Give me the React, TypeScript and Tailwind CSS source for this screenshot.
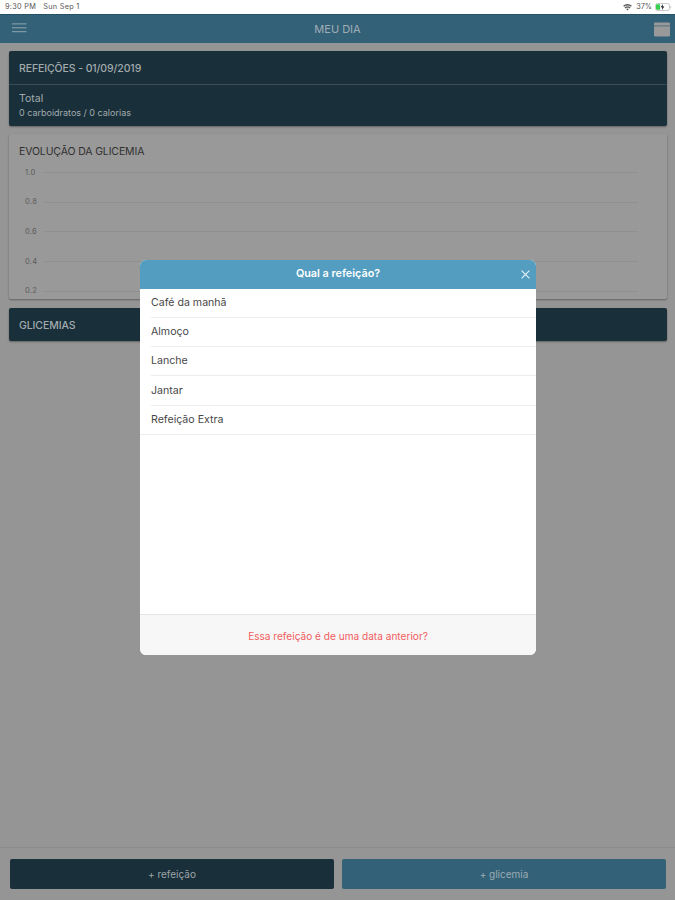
import type { ReactNode } from "react";

const meals = ["Café da manhã", "Almoço", "Lanche", "Jantar", "Refeição Extra"];
const ticks = ["1.0", "0.8", "0.6", "0.4", "0.2"];

const StatusBar = () => (
    <div className="flex h-[14px] items-center justify-between bg-white pr-[3px] pl-[5px] text-[7.3px] leading-none text-[#555]">
        <div className="flex gap-[7px]">
            <span className="tracking-[0.3px]">9:30 PM</span>
            <span className="tracking-[0.3px]">Sun Sep 1</span>
        </div>
        <div className="flex items-center">
            <svg className="mr-[4px]" width="9" height="7" viewBox="0 0 9 7" fill="none" stroke="#555" strokeWidth="1.3">
                <path d="M.6 2.3C2.8.2 6.2.2 8.4 2.3M2 4.1c1.4-1.3 3.6-1.3 5 0" />
                <path d="M3.2 5.1 4.5 6.6l1.3-1.5c-.8-.7-1.8-.7-2.6 0Z" fill="#555" stroke="none" />
            </svg>
            <span className="mr-[3px]">37%</span>
            <svg width="17" height="8" viewBox="0 0 17 8">
                <rect x=".5" y=".5" width="14" height="7" rx="2" fill="#fff" stroke="#bbb" strokeWidth=".8" />
                <path d="M2 1.3h3v5.4H2a1 1 0 0 1-1-1V2.3a1 1 0 0 1 1-1Z" fill="#35d04f" />
                <path d="M8 .9 5.7 4.3h1.6L6.9 7l2.4-3.4H7.6Z" fill="#111" />
                <path d="M15.5 2.8c.9.4.9 2 0 2.4Z" fill="#aaa" />
            </svg>
        </div>
    </div>
);

const Header = () => (
    <header className="flex h-[29px] items-center justify-between border-t border-[#245368] bg-[#326178] pr-[5px] pl-[12px]">
        <svg className="-mt-[2px]" width="15" height="10" viewBox="0 0 15 10" stroke="#91a5af" strokeWidth="1">
            <path d="M0 .9h14.5M0 4.8h14.5M0 8.7h14.5" />
        </svg>
        <h1 className="-ml-[6px] text-[11px] leading-none text-[#a1adb5]">MEU DIA</h1>
        <svg width="16" height="15" viewBox="0 0 16 15">
            <path d="M1 .5h14a1 1 0 0 1 1 1v2H0v-2a1 1 0 0 1 1-1ZM0 4.3h16v9.2a1 1 0 0 1-1 1H1a1 1 0 0 1-1-1Z" fill="#999" />
            <path d="M0 3.9h16" stroke="#7b8589" strokeWidth=".8" />
        </svg>
    </header>
);

const Card = ({ className, children }: { className: string; children: ReactNode }) => (
    <section className={`mx-[8.5px] rounded-[2px] pl-[10.5px] shadow-[0_1px_2px_rgba(0,0,0,0.35)] ${className}`}>
        {children}
    </section>
);

const MealModal = () => (
    <div className="absolute top-[260px] left-[140px] flex h-[395px] w-[396px] flex-col overflow-hidden rounded-[6px] bg-white">
        <div className="relative flex h-[28.5px] shrink-0 items-center justify-center bg-[#529dc0]">
            <h2 className="text-[10.8px] leading-none font-semibold text-white">Qual a refeição?</h2>
            <svg className="absolute top-[10px] right-[6px]" width="9" height="9" viewBox="0 0 9 9" stroke="#e8f4fa" strokeWidth="1.1">
                <path d="M.6.6 8.4 8.4M8.4.6.6 8.4" />
            </svg>
        </div>
        <ul className="text-[10.6px] leading-none text-[#484848]">
            {meals.map((meal, i) => (
                <li key={meal} className={i === meals.length - 1 ? "border-b border-[#ededed] pl-[11px]" : "pl-[11px]"}>
                    <div className={i === meals.length - 1 ? "flex h-[28.3px] items-center pt-px" : "flex h-[29.3px] items-center border-b border-[#ededed] pt-px"}>
                        {meal}
                    </div>
                </li>
            ))}
        </ul>
        <div className="mt-auto flex h-[41px] items-center justify-center border-t border-[#e4e4e4] bg-[#f7f7f7] pt-[2px] text-[10.1px] leading-none text-[#f15d60]">
            Essa refeição é de uma data anterior?
        </div>
    </div>
);

const App = () => {
    return (
        <div className="relative flex h-[900px] w-[675px] flex-col overflow-hidden bg-[#959595] font-['Inter',sans-serif]">
            <StatusBar />
            <Header />

            <main className="flex flex-1 flex-col pt-[8px]">
                <Card className="h-[75px] bg-[#192f39] text-[#a3abaf]">
                    <div className="-ml-[10.5px] flex h-[33.5px] items-center border-b border-[#3b4c55] pt-[3px] pl-[10.5px] text-[10.5px] leading-none font-medium tracking-[-0.1px]">
                        REFEIÇÕES - 01/09/2019
                    </div>
                    <div className="pt-[9px] text-[10.5px] leading-none">Total</div>
                    <div className="pt-[4px] text-[9px] leading-none">0 carboidratos / 0 calorias</div>
                </Card>

                <Card className="mt-[8px] h-[165px] bg-[#999]">
                    <h3 className="pt-[13px] text-[10.5px] leading-none tracking-[-0.13px] text-[#303030]">EVOLUÇÃO DA GLICEMIA</h3>
                    <div className="pr-[29px] pl-[6px] text-[7.5px] leading-none text-[#5a5a5a]">
                        {ticks.map((tick) => (
                            <div key={tick} className="flex h-[29.7px] items-center gap-[6px]">
                                <span className="w-[13px] tracking-[0.3px]">{tick}</span>
                                <span className="h-px flex-1 bg-[#909090]" />
                            </div>
                        ))}
                    </div>
                </Card>

                <Card className="mt-[9px] flex h-[33px] items-center bg-[#192f39] pt-[3px] text-[10.5px] leading-none font-medium tracking-[-0.1px] text-[#a3abaf]">
                    GLICEMIAS
                </Card>
            </main>

            <footer className="flex h-[53px] gap-[8px] border-t border-[#8b8b8b] pt-[11px] pr-[9px] pl-[10px] text-[10px] leading-none">
                <button className="h-[30px] flex-1 rounded-[2px] bg-[#192f39] text-[#9ca5aa]">+ refeição</button>
                <button className="h-[30px] flex-1 rounded-[2px] bg-[#326178] text-[#9cabb4]">+ glicemia</button>
            </footer>

            <MealModal />
        </div>
    );
};

export default App;
